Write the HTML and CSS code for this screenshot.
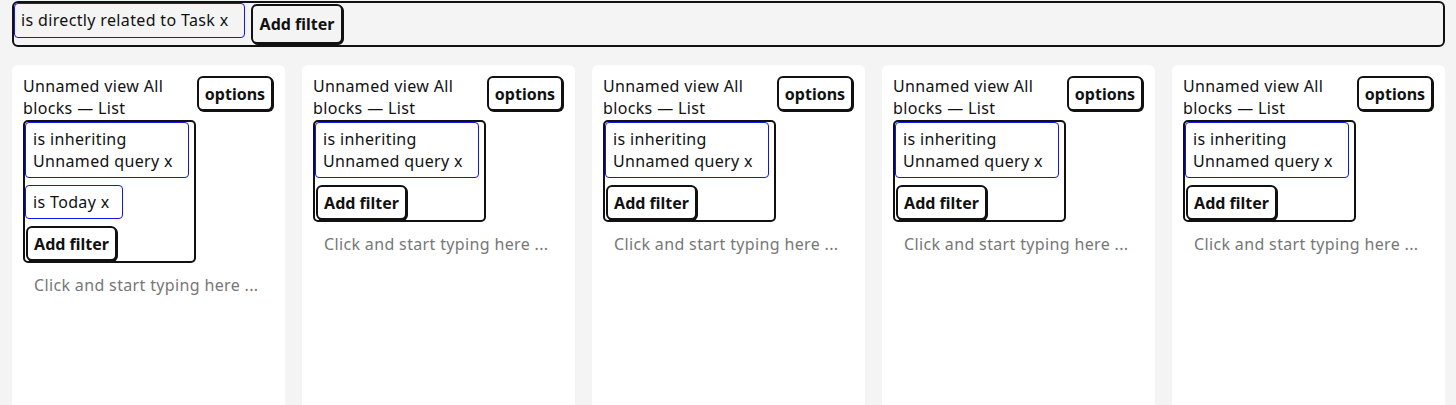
FILE: index.html
```html
<!DOCTYPE html>
<html>
<head>
<meta charset="utf-8">
<link rel="stylesheet" href="styles.css">
</head>
<body>
<div class="topbar">
  <span class="chip chip-top">is directly related to Task x</span>
  <button class="btn btn-top">Add filter</button>
</div>
<div class="cards">
  <div class="card">
    <div class="card-head">
      <div class="title">Unnamed view All blocks — List</div>
      <button class="btn btn-options">options</button>
    </div>
    <div class="filters">
      <span class="chip chip-wide">is inheriting Unnamed query x</span>
      <span class="chip">is Today x</span>
      <button class="btn btn-add">Add filter</button>
    </div>
    <div class="placeholder">Click and start typing here ...</div>
  </div>
  <div class="card">
    <div class="card-head">
      <div class="title">Unnamed view All blocks — List</div>
      <button class="btn btn-options">options</button>
    </div>
    <div class="filters">
      <span class="chip chip-wide">is inheriting Unnamed query x</span>
      <button class="btn btn-add">Add filter</button>
    </div>
    <div class="placeholder">Click and start typing here ...</div>
  </div>
  <div class="card">
    <div class="card-head">
      <div class="title">Unnamed view All blocks — List</div>
      <button class="btn btn-options">options</button>
    </div>
    <div class="filters">
      <span class="chip chip-wide">is inheriting Unnamed query x</span>
      <button class="btn btn-add">Add filter</button>
    </div>
    <div class="placeholder">Click and start typing here ...</div>
  </div>
  <div class="card">
    <div class="card-head">
      <div class="title">Unnamed view All blocks — List</div>
      <button class="btn btn-options">options</button>
    </div>
    <div class="filters">
      <span class="chip chip-wide">is inheriting Unnamed query x</span>
      <button class="btn btn-add">Add filter</button>
    </div>
    <div class="placeholder">Click and start typing here ...</div>
  </div>
  <div class="card">
    <div class="card-head">
      <div class="title">Unnamed view All blocks — List</div>
      <button class="btn btn-options">options</button>
    </div>
    <div class="filters">
      <span class="chip chip-wide">is inheriting Unnamed query x</span>
      <button class="btn btn-add">Add filter</button>
    </div>
    <div class="placeholder">Click and start typing here ...</div>
  </div>
</div>
</body>
</html>
```

FILE: styles.css
```css
* { box-sizing: border-box; }
html, body { margin: 0; padding: 0; }
body {
  background: #f4f4f4;
  font-family: "Noto Sans", "Liberation Sans", sans-serif;
  font-size: 16px;
  line-height: 22px;
  letter-spacing: 0.35px;
  color: #111;
  overflow: hidden;
}
.topbar {
  margin: 1px 11px 0 12px;
  border: 2px solid #111;
  border-radius: 6px;
  display: flex;
  align-items: flex-start;
  gap: 6px;
  height: 46px;
  background: #f4f4f4;
}
.chip {
  display: inline-block;
  border: 1px solid #1515e8;
  border-radius: 4px;
  padding: 5px 12px 5px 7px;
  line-height: 22px;
  background: #fff;
  white-space: normal;
}
.chip-top {
  background: transparent;
  padding: 5px 6px 6px 6px;
  width: 231px;
  white-space: nowrap;
}
.btn {
  font-family: inherit;
  font-size: 16px;
  font-weight: 700;
  letter-spacing: 0;
  color: #111;
  background: #fff;
  border: 2px solid #111;
  border-radius: 6px;
  box-shadow: 1px 1px 0 #111;
  padding: 0;
  line-height: 20px;
  white-space: nowrap;
  cursor: pointer;
}
.btn-top {
  margin-top: 1px;
  height: 40px;
  width: 92px;
  background: #f4f4f4;
}
.cards {
  display: flex;
  gap: 17px;
  margin: 18px 11px 0 12px;
}
.card {
  width: 273px;
  flex: none;
  background: #fff;
  border-radius: 6px;
  padding: 10px 12px 0 11px;
  min-height: 400px;
}
.card-head {
  display: flex;
  justify-content: space-between;
  align-items: flex-start;
}
.title {
  width: 172px;
  line-height: 22px;
}
.btn-options {
  margin-top: 1px;
  width: 76px;
  height: 35px;
}
.filters {
  width: 173px;
  margin-top: 1px;
  border: 2px solid #111;
  border-radius: 5px;
  display: flex;
  flex-direction: column;
  align-items: flex-start;
  gap: 7px;
}
.chip-wide {
  width: 164px;
}
.btn-add {
  margin-left: 1px;
  width: 91px;
  height: 35px;
}
.placeholder {
  margin-top: 11px;
  padding-left: 11px;
  color: #777;
  white-space: nowrap;
}
```
